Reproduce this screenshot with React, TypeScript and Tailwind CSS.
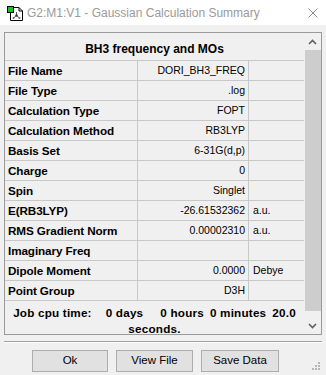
import React from "react";

const rows: [string, string, string][] = [
  ["File Name", "DORI_BH3_FREQ", ""],
  ["File Type", ".log", ""],
  ["Calculation Type", "FOPT", ""],
  ["Calculation Method", "RB3LYP", ""],
  ["Basis Set", "6-31G(d,p)", ""],
  ["Charge", "0", ""],
  ["Spin", "Singlet", ""],
  ["E(RB3LYP)", "-26.61532362", "a.u."],
  ["RMS Gradient Norm", "0.00002310", "a.u."],
  ["Imaginary Freq", "", ""],
  ["Dipole Moment", "0.0000", "Debye"],
  ["Point Group", "D3H", ""],
];

function AppIcon() {
  return (
    <svg width="16" height="15" viewBox="0 0 16 15" className="shrink-0">
      <path d="M3.5 1.5 H12 L15.5 5 V14.5 H3.5 Z" fill="#fff" stroke="#000" strokeWidth="1" />
      <path d="M12 1.5 V5 H15.5" fill="none" stroke="#000" strokeWidth="1" />
      <line x1="9.5" y1="6" x2="9.5" y2="9.5" stroke="#555" strokeWidth="1" />
      <line x1="9.5" y1="9.5" x2="6.5" y2="12" stroke="#555" strokeWidth="1" />
      <line x1="9.5" y1="9.5" x2="12.5" y2="12" stroke="#555" strokeWidth="1" />
      <circle cx="9.5" cy="9.5" r="1.2" fill="#333" />
      <circle cx="6.5" cy="12" r="1" fill="#666" />
      <circle cx="12.5" cy="12" r="1" fill="#666" />
      <rect x="0.5" y="0.5" width="6" height="6" fill="#1fc11f" stroke="#000" strokeWidth="1" />
    </svg>
  );
}

function Chevron({ down }: { down?: boolean }) {
  return (
    <svg width="9" height="6" viewBox="0 0 9 6">
      <path
        d={down ? "M1 1 L4.5 4.5 L8 1" : "M1 5 L4.5 1.5 L8 5"}
        fill="none"
        stroke="#606060"
        strokeWidth="1.6"
      />
    </svg>
  );
}

export default function App() {
  return (
    <div className="w-[326px] h-[375px] bg-[#f0f0f0] flex flex-col font-['Liberation_Sans',Arial,sans-serif] text-black relative overflow-hidden">
      {/* Title bar */}
      <div className="h-[25px] bg-white flex items-center shrink-0">
        <div className="ml-[7px] mt-[1px]">
          <AppIcon />
        </div>
        <span className="ml-[4px] text-[12px] text-[#9a9a9a]">G2:M1:V1 - Gaussian Calculation Summary</span>
        <div className="ml-auto mr-[8px] w-[10px] h-[10px]">
          <svg width="10" height="10" viewBox="0 0 10 10">
            <path d="M0.5 0.5 L9.5 9.5 M9.5 0.5 L0.5 9.5" stroke="#8a8a8a" strokeWidth="1" />
          </svg>
        </div>
      </div>

      {/* Panel */}
      <div className="mx-[4px] mt-[7px] h-[303px] border border-[#9a9a9a] flex">
        <div className="flex-1 flex flex-col">
          <div className="h-[28px] border-b border-[#c8c8c8] flex items-center justify-center pt-[4px] font-bold text-[12px]">
            BH3 frequency and MOs
          </div>
          {rows.map(([label, value, unit]) => (
            <div key={label} className="h-[20px] border-b border-[#c8c8c8] flex">
              <div className="w-[133px] border-r border-[#c8c8c8] pl-[3px] flex items-center font-bold text-[11.7px] tracking-[-0.1px]">
                {label}
              </div>
              <div className="w-[111px] border-r border-[#c8c8c8] pr-[3px] flex items-center justify-end text-[10.5px]">
                {value}
              </div>
              <div className="flex-1 pl-[4px] flex items-center text-[10.5px]">{unit}</div>
            </div>
          ))}
          <div className="flex-1 overflow-hidden pt-[4px] font-bold text-[11.7px] leading-[16px] flex flex-col items-center">
            <div className="flex whitespace-pre tracking-[0.2px]">
              <span>Job cpu time:</span>
              <span className="ml-[14px]">0 days</span>
              <span className="ml-[17px]">0 hours</span>
              <span className="ml-[6px]">0 minutes</span>
              <span className="ml-[6px]">20.0</span>
            </div>
            <div className="tracking-[0.2px]">seconds.</div>
          </div>
        </div>
        {/* Scrollbar */}
        <div className="w-[17px] flex flex-col">
          <div className="h-[17px] flex items-center justify-center">
            <Chevron />
          </div>
          <div className="h-[261px] ml-[1px] bg-[#cdcdcd]" />
          <div className="flex-1" />
          <div className="h-[17px] flex items-center justify-center">
            <Chevron down />
          </div>
        </div>
      </div>

      {/* Separator */}
      <div className="mx-[4px] mt-[6px] h-[2px] border-t border-[#a0a0a0] border-b border-b-white" />

      {/* Buttons */}
      <div className="mt-[7px] ml-[32px] flex gap-[8px]">
        <button className="w-[76px] h-[22px] bg-[#e1e1e1] border border-[#adadad] text-[11.5px]">Ok</button>
        <button className="w-[77px] h-[22px] bg-[#e1e1e1] border border-[#adadad] text-[11.5px]">View File</button>
        <button className="w-[78px] h-[22px] bg-[#e1e1e1] border border-[#adadad] text-[11.5px]">Save Data</button>
      </div>

      {/* Size grip */}
      <div className="absolute right-[5px] bottom-[4px] w-[9px] h-[9px]">
        <svg width="9" height="9" viewBox="0 0 9 9">
          <rect x="6" y="0" width="2" height="2" fill="#b8b8b8" />
          <rect x="3" y="3" width="2" height="2" fill="#b8b8b8" />
          <rect x="6" y="3" width="2" height="2" fill="#b8b8b8" />
          <rect x="0" y="6" width="2" height="2" fill="#b8b8b8" />
          <rect x="3" y="6" width="2" height="2" fill="#b8b8b8" />
          <rect x="6" y="6" width="2" height="2" fill="#b8b8b8" />
        </svg>
      </div>
    </div>
  );
}
